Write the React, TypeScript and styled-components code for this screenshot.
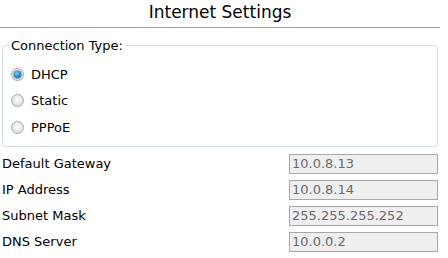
import React from "react";
import styled, { createGlobalStyle } from "styled-components";

const Global = createGlobalStyle`
  html, body { margin: 0; padding: 0; background: #ffffff; }
  body { font-family: "DejaVu Sans", Verdana, sans-serif; color: #000000; }
`;

const Page = styled.div`
  width: 440px;
  display: flex;
  flex-direction: column;
`;

const Header = styled.div`
  height: 27px;
  border-bottom: 1px solid #a0a0a0;
  display: flex;
  justify-content: center;
  align-items: flex-start;
`;

const Title = styled.h1`
  margin: 0;
  font-size: 17px;
  font-weight: normal;
  line-height: 24px;
  color: #000;
`;

const Group = styled.fieldset`
  margin: 10px 2px 0 2px;
  padding: 8px 8px 5px 8px;
  border: 1px solid #d3dde6;
  border-radius: 4px;
  display: flex;
  flex-direction: column;
`;

const Legend = styled.legend`
  padding: 0 3px 0 2px;
  margin-left: -2px;
  font-size: 13px;
  line-height: 15px;
  color: #000;
`;

const RadioRow = styled.label`
  height: 26.5px;
  display: flex;
  align-items: center;
  gap: 7px;
  font-size: 13px;
  color: #000;
`;

const RadioDot = styled.span<{ $checked?: boolean }>`
  width: 13px;
  height: 13px;
  box-sizing: border-box;
  border-radius: 50%;
  border: 1px solid #a8a8a8;
  background: radial-gradient(circle at 50% 40%, #ffffff 0%, #e4e4e4 60%, #cfcfcf 100%);
  display: flex;
  align-items: center;
  justify-content: center;
  flex: none;
  &::after {
    content: "";
    display: ${(p) => (p.$checked ? "block" : "none")};
    width: 7px;
    height: 7px;
    border-radius: 50%;
    background: radial-gradient(circle at 40% 35%, #7fd0f5 0%, #1a8ad0 55%, #0b5c99 100%);
    box-shadow: 0 0 0 0.5px #0d4f80;
  }
`;

const Fields = styled.div`
  margin-top: 7px;
  display: grid;
  grid-template-columns: 1fr 149px;
  row-gap: 6px;
  padding: 0 2px 0 2px;
`;

const FieldLabel = styled.span`
  font-size: 13px;
  line-height: 20px;
  color: #000;
`;

const Value = styled.div`
  height: 20px;
  box-sizing: border-box;
  border: 1px solid #a8a8a8;
  background: #efefef;
  font-size: 13px;
  line-height: 18px;
  padding-left: 2px;
  color: #6a6a6a;
`;

const radios = [
  { label: "DHCP", checked: true },
  { label: "Static", checked: false },
  { label: "PPPoE", checked: false },
];

const fields = [
  ["Default Gateway", "10.0.8.13"],
  ["IP Address", "10.0.8.14"],
  ["Subnet Mask", "255.255.255.252"],
  ["DNS Server", "10.0.0.2"],
];

export default function App() {
  return (
    <Page>
      <Global />
      <Header>
        <Title>Internet Settings</Title>
      </Header>
      <Group>
        <Legend>Connection Type:</Legend>
        {radios.map((r) => (
          <RadioRow key={r.label}>
            <RadioDot $checked={r.checked} />
            {r.label}
          </RadioRow>
        ))}
      </Group>
      <Fields>
        {fields.map(([l, v]) => (
          <React.Fragment key={l}>
            <FieldLabel>{l}</FieldLabel>
            <Value>{v}</Value>
          </React.Fragment>
        ))}
      </Fields>
    </Page>
  );
}
